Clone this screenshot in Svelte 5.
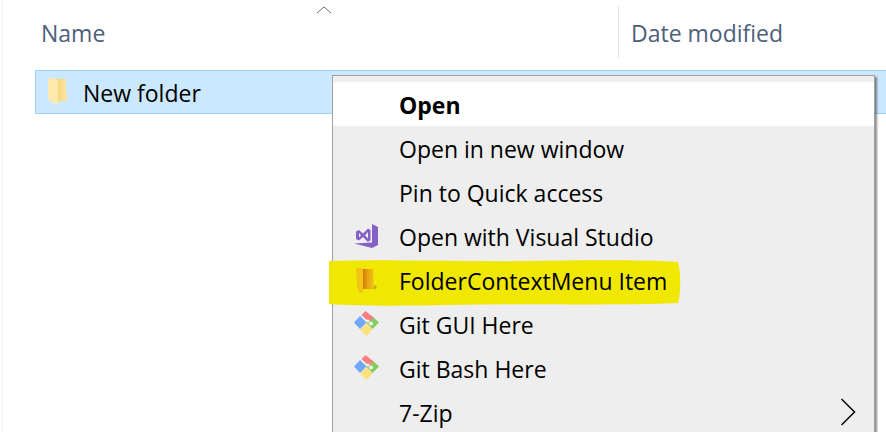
<script>
  const items = [
    { label: 'Open', bold: true },
    { label: 'Open in new window' },
    { label: 'Pin to Quick access' },
    { label: 'Open with Visual Studio', icon: 'vs' },
    { label: 'FolderContextMenu Item', icon: 'folder' },
    { label: 'Git GUI Here', icon: 'git' },
    { label: 'Git Bash Here', icon: 'git' },
    { label: '7-Zip', arrow: true }
  ];
</script>

{#snippet gitIcon()}
  <svg class="icon git" width="25" height="25" viewBox="0 0 25 25">
    <path d="M0 11.5 L6 5 L12.5 11.5 L6 18 Z" fill="#6fa8fb" />
    <path d="M6 18.5 L12.5 12.5 L18.5 18.5 L12.5 25 Z" fill="#fbe07c" />
    <path d="M12 11.5 L18.5 5.5 L25 11.5 L18.5 18 Z" fill="#86cc5c" />
    <path d="M7.5 4 L11.5 0 L19.5 6.5 L15 11 Z" fill="#f77f7f" />
    <circle cx="14" cy="10" r="1.5" fill="#efefef" />
    <circle cx="17" cy="12.5" r="2" fill="#f4f4f4" />
  </svg>
{/snippet}

<div class="page">
  <div class="edge"></div>
  <svg class="sort" width="16" height="8" viewBox="0 0 16 8"><path d="M1 7 L8 1 L15 7" fill="none" stroke="#6d6d6d" stroke-width="1" /></svg>

  <header class="head">
    <div class="col name">Name</div>
    <div class="col date">Date modified</div>
  </header>

  <div class="row">
    <svg class="rowicon" width="20" height="28" viewBox="0 0 20 28">
      <defs>
        <linearGradient id="pl" x1="0" x2="1" y1="0" y2="0">
          <stop offset="0" stop-color="#f4cf6c" />
          <stop offset="1" stop-color="#fbe49c" />
        </linearGradient>
      </defs>
      <path d="M5 1 H18 V23 H5 Z" fill="url(#pl)" />
      <path d="M0 0 H5 L10 3 V27 L7 26 L0 21 Z" fill="#fde9ad" />
      <path d="M18 15 H19 V23 H18 Z" fill="#f4e2b0" />
    </svg>
    <span class="text">New folder</span>
  </div>

  <div class="menu">
    {#each items as item}
      <div class="item" class:bold={item.bold}>
        <span class="slot">
          {#if item.icon === 'vs'}
            <svg class="icon" width="24" height="24" viewBox="0 0 24 24">
              <path d="M18 0 L24 3 V21 L18 24 L0 19.5 L18 18.5 Z" fill="#8661c5" />
              <path d="M2 7.5 L5 6 L9 9.5 L14 4.5 L16.5 6 V16 L14 18 L9 13 L5 16.5 L2 15 Z M5 9 V13.5 L7 11.2 Z M14 8 L11 11.2 L14 14.5 Z" fill="#8661c5" fill-rule="evenodd" />
            </svg>
          {:else if item.icon === 'folder'}
            <svg class="icon" width="21" height="25" viewBox="0 0 21 25">
              <defs>
                <linearGradient id="fl" x1="0" x2="1" y1="0" y2="0">
                  <stop offset="0" stop-color="#c9660c" />
                  <stop offset="0.5" stop-color="#e6a212" />
                  <stop offset="1" stop-color="#f2c418" />
                </linearGradient>
              </defs>
              <path d="M5 1 H17 L18 21 H5 Z" fill="url(#fl)" />
              <path d="M0 0 H5 L7 2 V24 L4 25 L1 20 Z" fill="#f3c415" />
              <path d="M18 17 L21 19 L18 22 Z" fill="#b5ae10" />
            </svg>
          {:else if item.icon === 'git'}
            {@render gitIcon()}
          {/if}
        </span>
        <span class="label">{item.label}</span>
        {#if item.arrow}
          <svg class="arrow" width="16" height="28" viewBox="0 0 16 28"><path d="M1.5 1 L14.5 14 L1.5 27" fill="none" stroke="#111" stroke-width="1.6" /></svg>
        {/if}
      </div>
    {/each}
  </div>

  <svg class="marker" width="354" height="48" viewBox="0 0 354 48">
    <path d="M0 2 C60 0 120 3 200 2 C260 1 320 1 349 3 C352 14 352 32 349 44 C280 47 200 44 120 46 C70 47 30 47 0 45 Z" fill="#f0e800" />
  </svg>
</div>

<style>
  :global(body) {
    margin: 0;
    background: #fff;
  }

  .page {
    position: relative;
    width: 886px;
    height: 432px;
    overflow: hidden;
    background: #fff;
    font-family: "Open Sans", "Noto Sans", sans-serif;
    font-size: 23px;
  }

  .edge {
    position: absolute;
    left: 2px;
    top: 0;
    width: 1px;
    height: 100%;
    background: #f2f2f2;
  }

  .sort {
    position: absolute;
    left: 316px;
    top: 6px;
  }

  .head {
    display: flex;
    height: 70px;
    color: #4c607a;
  }

  .col {
    display: flex;
    align-items: center;
    height: 52px;
    margin-top: 6px;
    padding-top: 2px;
    box-sizing: border-box;
  }

  .name {
    width: 618px;
    padding-left: 41px;
  }

  .date {
    border-left: 1px solid #e5e5e5;
    padding-left: 12px;
  }

  .row {
    display: flex;
    align-items: center;
    gap: 15px;
    box-sizing: border-box;
    height: 44px;
    margin-left: 35px;
    padding-left: 12px;
    background: #cce8ff;
    border: 1px solid #99d1ff;
    border-right: 0;
    color: #000;
  }

  .text {
    padding-top: 2px;
  }

  .rowicon {
    flex: none;
  }

  .menu {
    position: absolute;
    left: 332px;
    top: 75px;
    width: 543px;
    height: 400px;
    box-sizing: border-box;
    padding-top: 6px;
    background: #eeeeee;
    border: 1px solid #a0a0a0;
    box-shadow: 2px 2px 2px rgba(0, 0, 0, 0.45);
    color: #000;
  }

  .item {
    position: relative;
    z-index: 2;
    display: flex;
    align-items: center;
    height: 44px;
  }

  .item.bold {
    background: #fff;
    font-weight: 700;
  }

  .slot {
    display: flex;
    align-items: center;
    justify-content: center;
    flex: none;
    width: 66px;
    height: 100%;
  }

  .git {
    margin-bottom: 2px;
  }

  .label {
    white-space: nowrap;
    padding-top: 2px;
  }

  .arrow {
    position: absolute;
    right: 18px;
    top: 8px;
  }

  .marker {
    position: absolute;
    z-index: 1;
    left: 329px;
    top: 259px;
  }
</style>
